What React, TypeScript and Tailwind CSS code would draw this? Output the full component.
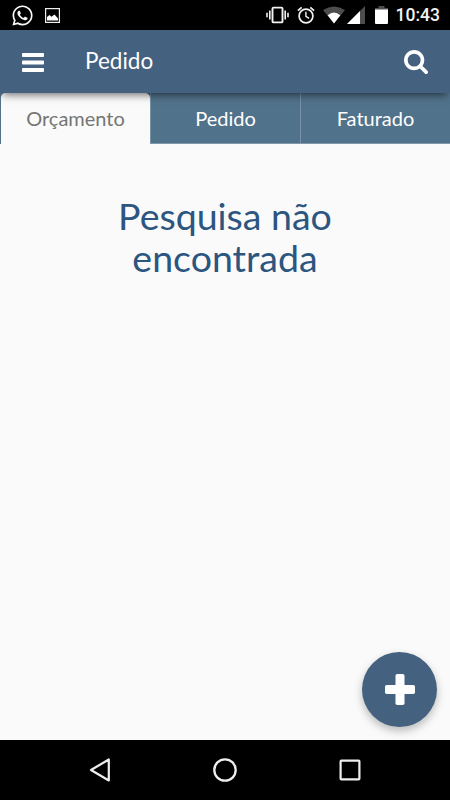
import { useState } from "react";
import { FaWhatsapp } from "react-icons/fa";

const tabs = ["Orçamento", "Pedido", "Faturado"];

const StatusBar = () => {
	return (
		<div className="flex h-[30px] items-center justify-between bg-black pl-[11px] pr-[10px] text-white">
			<div className="flex items-center gap-[11px]">
				<FaWhatsapp className="size-[23px] text-[#f8f8f8]" />
				{/* picture notification */}
				<svg width="15" height="15" viewBox="0 0 15 15" fill="none">
					<rect x="0.6" y="0.6" width="13.8" height="13.8" stroke="#eee" strokeWidth="1.2" />
					<path d="M2 12.500V9L4.500 7l2 1.700L9.500 6.500l3.500 4v2z" fill="#fff" />
				</svg>
			</div>
			<div className="flex items-center">
				{/* vibrate */}
				<svg width="23" height="18" viewBox="0 0 23 18" fill="none" stroke="#f2f2f2" className="mr-[8px]">
					<rect x="6.500" y="1.600" width="10" height="14.800" rx="1" strokeWidth="1.900" />
					<path d="M3.800 4.500v9M19.200 4.500v9M1 6.800v4.400M22 6.800v4.400" strokeWidth="1.600" />
				</svg>
				{/* alarm */}
				<svg width="18" height="18" viewBox="0 0 18 18" fill="none" stroke="#f2f2f2" className="mr-[8px]">
					<circle cx="9" cy="10" r="6.900" strokeWidth="1.700" />
					<path d="M8.900 5.800v4.500l3.200 2" strokeWidth="1.400" />
					<path d="M.9 4.600 4.700 1.300M17.100 4.600 13.300 1.300" strokeWidth="1.700" />
				</svg>
				{/* wifi */}
				<svg width="22" height="18" viewBox="0 0 22 18" className="mr-[2px]">
					<path d="M0 4Q11-3.200 22 4L11 17.500z" fill="#4d4d4d" />
					<path d="M4.700 9.300Q11 3.900 17.300 9.300L11 17.500z" fill="#fff" />
				</svg>
				{/* signal */}
				<svg width="18" height="18" viewBox="0 0 18 18" className="mr-[10px]">
					<path d="M18 0v18H0z" fill="#4d4d4d" />
					<path d="M13 5v13H0z" fill="#fff" />
				</svg>
				{/* battery */}
				<svg width="13" height="18" viewBox="0 0 13 18" className="mr-[8px]">
					<path d="M3.500 0h6v2H13v3H0V2h3.500z" fill="#4d4d4d" />
					<path d="M0 3.500h13V17q0 1-1 1H1q-1 0-1-1z" fill="#fff" />
				</svg>
				<span className="pt-px font-[Roboto] text-[17.500px] font-medium leading-[29px] text-[#f2f2f2]">10:43</span>
			</div>
		</div>
	);
};

const Header = () => {
	return (
		<header className="relative z-10 flex h-[63px] items-center bg-[#446180] pl-[22px] pr-[22px] text-white shadow-[0_5px_8px_-3px_rgba(0,0,0,0.55)]">
			<button type="button" aria-label="Menu" className="pt-px">
				<svg width="22" height="19" viewBox="0 0 22 19" fill="#fff" className="block">
					<rect width="22" height="4" rx="0.900" />
					<rect y="7.500" width="22" height="4" rx="0.900" />
					<rect y="15" width="22" height="4" rx="0.900" />
				</svg>
			</button>
			<h1 className="ml-[41px] flex-1 pb-[2px] text-[22.500px] leading-[28px]">Pedido</h1>
			<button type="button" aria-label="Pesquisar">
				<svg width="24" height="24" viewBox="0 128 1664 1664" fill="#fff" className="block">
					<path d="M1152 832q0-185-131.500-316.500t-316.500-131.500-316.500 131.500-131.500 316.500 131.500 316.500 316.500 131.500 316.500-131.500 131.500-316.500zm512 832q0 52-38 90t-90 38q-54 0-90-38l-343-342q-179 124-399 124-143 0-273.500-55.500t-225-150-150-225-55.500-273.500 55.500-273.500 150-225 225-150 273.500-55.500 273.500 55.500 225 150 150 225 55.500 273.500q0 220-124 399l343 343q37 37 37 90z" />
				</svg>
			</button>
		</header>
	);
};

const App = () => {
	const [active, setActive] = useState<string>("Orçamento");

	return (
		<div className="flex h-[800px] w-[450px] flex-col overflow-hidden bg-[#fafafa] font-[Lato,sans-serif]">
			<StatusBar />
			<Header />

			<nav className="grid h-[51px] grid-cols-3 bg-[#51728b]">
				{tabs.map((tab) => (
					<button
						key={tab}
						type="button"
						onClick={() => setActive(tab)}
						className={
							tab === active
								? "rounded-t-[5px] border-l border-[#51728b] bg-[#fafafa] pb-[2px] text-[20px] text-[#757575]"
								: "border-b border-l border-b-[#8299ab] border-l-[#7893a8] text-[20px] text-white first:border-l-0"
						}
					>
						{tab}
					</button>
				))}
			</nav>

			<main className="relative flex-1">
				<p className="mx-auto mt-[51px] w-[260px] text-center text-[37.500px] leading-[42px] text-[#2c5580]">
					Pesquisa não encontrada
				</p>
				<button
					type="button"
					aria-label="Adicionar"
					className="absolute bottom-[13px] right-[13px] flex size-[75px] items-center justify-center rounded-full bg-[#446180] shadow-[0_4px_8px_rgba(0,0,0,0.26)]"
				>
					<svg width="30" height="31" viewBox="0 0 30 31" fill="#fff">
						<rect x="10.500" width="9" height="31" rx="1.800" />
						<rect y="11" width="30" height="9" rx="1.800" />
					</svg>
				</button>
			</main>

			{/* android navigation */}
			<footer className="flex h-[60px] items-center justify-between bg-black pl-[89px] pr-[89px]">
				<svg width="22" height="24" viewBox="0 0 22 24" fill="none" stroke="#eee" strokeWidth="2.200" strokeLinejoin="round">
					<path d="M19.800 1.500v21L2 12z" />
				</svg>
				<svg width="24" height="24" viewBox="0 0 24 24" fill="none" stroke="#eee" strokeWidth="2.300">
					<circle cx="12" cy="12" r="10.700" />
				</svg>
				<svg width="22" height="22" viewBox="0 0 22 22" fill="none" stroke="#eee" strokeWidth="2.200">
					<rect x="1.600" y="1.600" width="18.800" height="18.800" rx="0.800" />
				</svg>
			</footer>
		</div>
	);
};

export default App;
